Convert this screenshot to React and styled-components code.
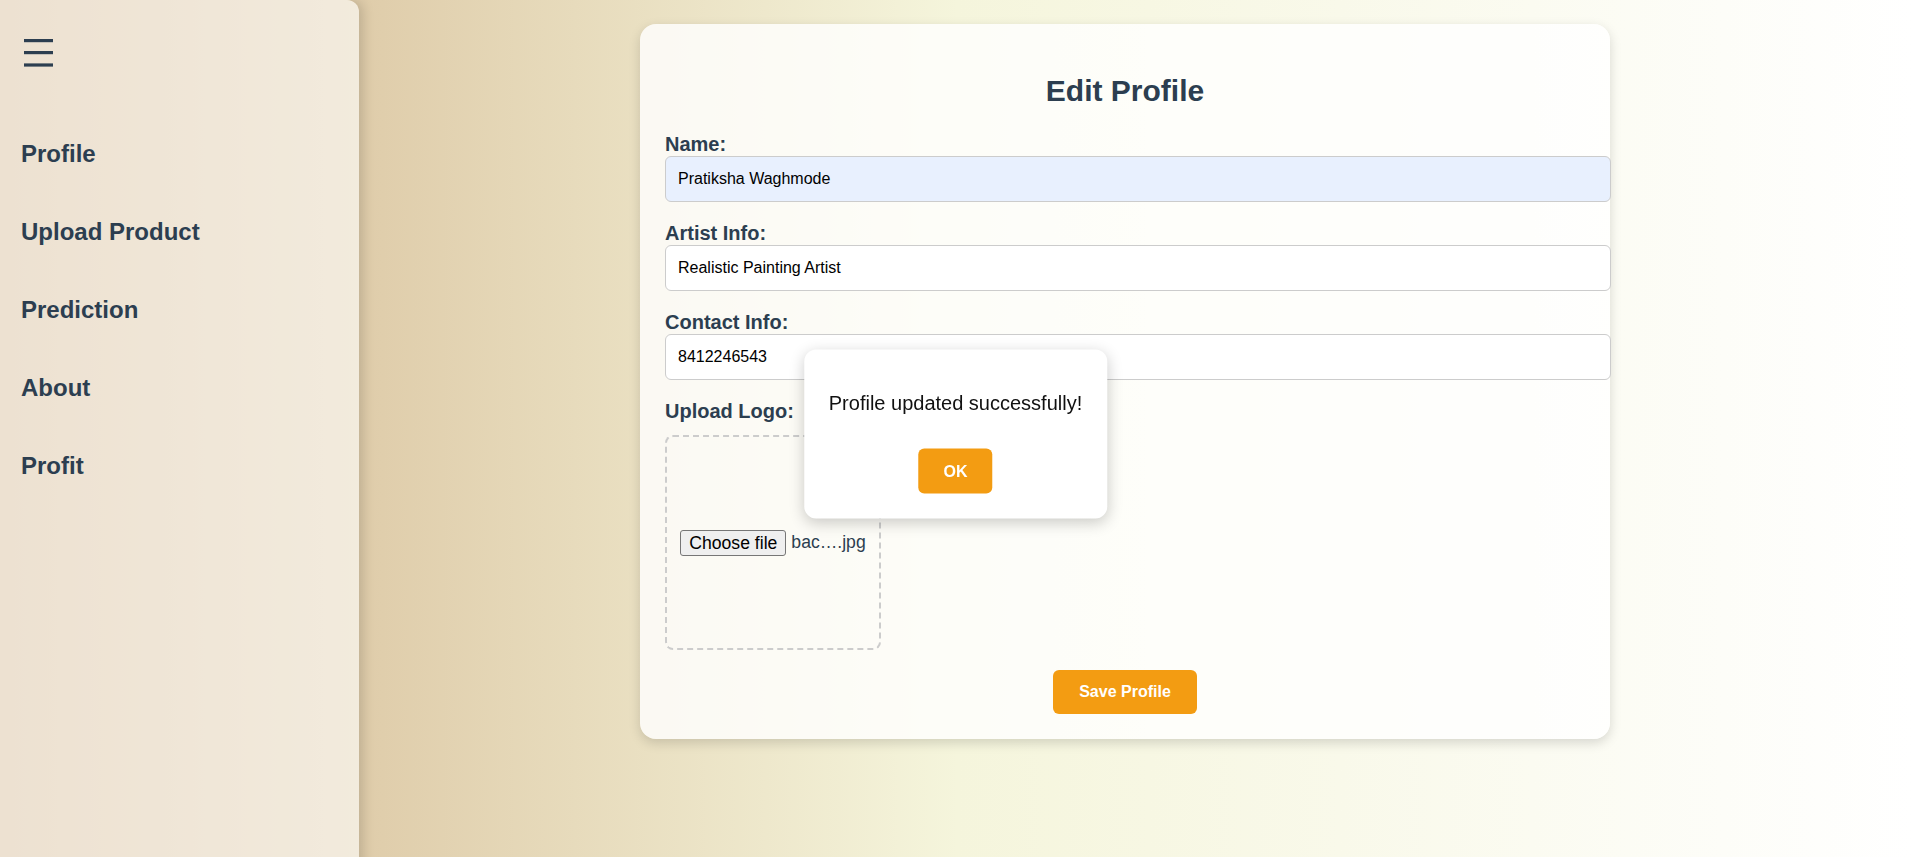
import React, { useState } from "react";
import styled, { createGlobalStyle } from "styled-components";

const GlobalStyle = createGlobalStyle`
  html, body {
    margin: 0;
    padding: 0;
  }
  body {
    font-family: "Liberation Sans", Arial, sans-serif;
  }
  * {
    font-family: "Liberation Sans", Arial, sans-serif;
  }
`;

const Page = styled.div`
  display: flex;
  min-height: 100vh;
  background: linear-gradient(to right, #d2b48c, #f5f5dc, #ffffff);
`;

const Sidebar = styled.aside`
  width: 318px;
  height: 100vh;
  flex-shrink: 0;
  padding: 20px 20px 20px 21px;
  background: rgba(255, 255, 255, 0.6);
  border-radius: 0 12px 0 0;
  box-shadow: 4px 0 12px rgba(0, 0, 0, 0.15);
  position: relative;
  z-index: 1;
`;

const MenuButton = styled.div`
  width: 29px;
  height: 28px;
  margin: 19px 0 0 3px;
  color: #2c3e50;
  cursor: pointer;
`;

const NavList = styled.ul`
  list-style: none;
  margin: 48px 0 0;
  padding: 0;
`;

const NavItem = styled.li`
  font-size: 24px;
  line-height: 28px;
  font-weight: bold;
  color: #2c3e50;
  padding: 25px 0;
  cursor: pointer;
`;

const Main = styled.main`
  flex: 1;
  display: flex;
  justify-content: center;
  align-items: flex-start;
  padding: 24px 24px 0 0;
`;

const Card = styled.div`
  width: 920px;
  padding: 25px;
  background: rgba(255, 255, 255, 0.8);
  border-radius: 16px;
  box-shadow: 0 4px 12px rgba(0, 0, 0, 0.15);
  color: #2c3e50;
`;

const Title = styled.h2`
  margin: 25px 0 25px;
  font-size: 30px;
  line-height: 34px;
  font-weight: bold;
  text-align: center;
  color: #2c3e50;
`;

const Label = styled.label`
  display: block;
  font-size: 20px;
  line-height: 23px;
  font-weight: bold;
  color: #2c3e50;
  margin-bottom: ${(props) => props.$gap || 0}px;
`;

const TextInput = styled.input`
  display: block;
  width: 100%;
  padding: 13px 12px;
  margin: 0 0 20px;
  font-size: 16px;
  line-height: 18px;
  color: #000;
  background: ${(props) => (props.$filled ? "#e8f0fe" : "#fff")};
  border: 1px solid #ccc;
  border-radius: 6px;
  outline: none;
`;

const DropBox = styled.div`
  width: 212px;
  height: 211px;
  border: 2px dashed #ccc;
  border-radius: 8px;
  display: flex;
  align-items: center;
  justify-content: center;
`;

const FilePicker = styled.div`
  display: flex;
  align-items: center;
  gap: 5px;
  font-size: 17.6px;
  color: #2c3e50;
`;

const FileButton = styled.button`
  font-size: 17.6px;
  line-height: 20px;
  padding: 2px 8px;
  color: #000;
  background: #efefef;
  border: 1px solid #767676;
  border-radius: 3px;
`;

const Actions = styled.div`
  display: flex;
  justify-content: center;
  margin-top: 20px;
`;

const OrangeButton = styled.button`
  padding: ${(props) => (props.$small ? "13px 25px" : "13px 26px")};
  font-size: 16px;
  line-height: ${(props) => (props.$small ? "19px" : "18px")};
  font-weight: bold;
  color: #fff;
  background: #f39c12;
  border: none;
  border-radius: 6px;
  cursor: pointer;
`;

const Popup = styled.div`
  position: fixed;
  left: 50%;
  top: 50%;
  transform: translate(-50%, -50%);
  margin-top: 5px;
  margin-left: -2px;
  padding: 25px;
  background: #fff;
  border-radius: 12px;
  box-shadow: 0 4px 15px rgba(0, 0, 0, 0.2);
  text-align: center;
  z-index: 10;
`;

const PopupText = styled.p`
  margin: 17px 0 34px;
  font-size: 20px;
  line-height: 23px;
  color: #111;
  white-space: nowrap;
`;

const navItems = ["Profile", "Upload Product", "Prediction", "About", "Profit"];

function MenuIcon() {
  return (
    <svg width="29" height="28" viewBox="0 0 29 28" fill="currentColor">
      <rect x="0" y="0" width="29" height="3.2" />
      <rect x="0" y="12" width="29" height="3.2" />
      <rect x="0" y="24.4" width="29" height="3.2" />
    </svg>
  );
}

export default function App() {
  const [showPopup, setShowPopup] = useState(true);
  const [name, setName] = useState("Pratiksha Waghmode");
  const [artist, setArtist] = useState("Realistic Painting Artist");
  const [contact, setContact] = useState("8412246543");

  return (
    <>
      <GlobalStyle />
      <Page>
        <Sidebar>
          <MenuButton>
            <MenuIcon />
          </MenuButton>
          <NavList>
            {navItems.map((item) => (
              <NavItem key={item}>{item}</NavItem>
            ))}
          </NavList>
        </Sidebar>

        <Main>
          <Card>
            <Title>Edit Profile</Title>

            <Label>Name:</Label>
            <TextInput
              $filled
              value={name}
              onChange={(e) => setName(e.target.value)}
            />

            <Label>Artist Info:</Label>
            <TextInput
              value={artist}
              onChange={(e) => setArtist(e.target.value)}
            />

            <Label>Contact Info:</Label>
            <TextInput
              value={contact}
              onChange={(e) => setContact(e.target.value)}
            />

            <Label $gap={12}>Upload Logo:</Label>
            <DropBox>
              <FilePicker>
                <FileButton type="button">Choose file</FileButton>
                <span>bac….jpg</span>
              </FilePicker>
            </DropBox>

            <Actions>
              <OrangeButton onClick={() => setShowPopup(true)}>
                Save Profile
              </OrangeButton>
            </Actions>
          </Card>
        </Main>
      </Page>

      {showPopup && (
        <Popup>
          <PopupText>Profile updated successfully!</PopupText>
          <OrangeButton $small onClick={() => setShowPopup(false)}>
            OK
          </OrangeButton>
        </Popup>
      )}
    </>
  );
}
